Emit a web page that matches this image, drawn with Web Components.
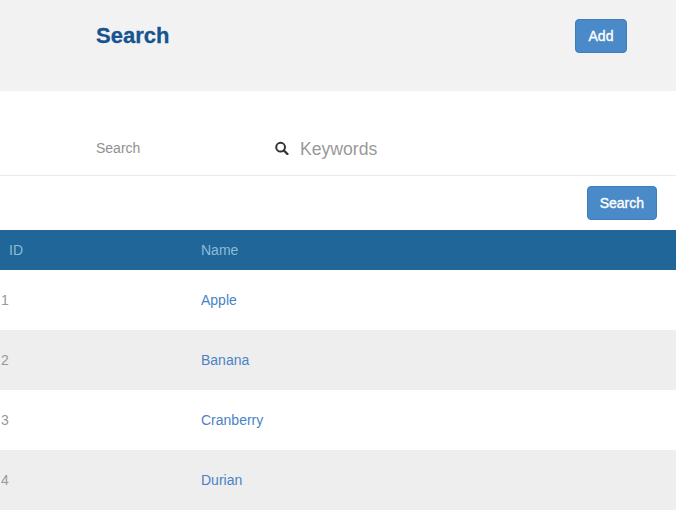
<!DOCTYPE html>
<html>
<head>
<meta charset="utf-8">
<style>
  html, body { margin: 0; padding: 0; background: #fff; overflow: hidden; }
  body { font-family: "Liberation Sans", Arial, sans-serif; }
</style>
</head>
<body>
<page-header heading="Search"><app-button>Add</app-button></page-header>
<search-form label="Search" placeholder="Keywords"></search-form>
<search-actions><app-button>Search</app-button></search-actions>
<fruit-table>
  <fruit-row item-id="1" name="Apple"></fruit-row>
  <fruit-row item-id="2" name="Banana"></fruit-row>
  <fruit-row item-id="3" name="Cranberry"></fruit-row>
  <fruit-row item-id="4" name="Durian"></fruit-row>
</fruit-table>

<script>
class AppButton extends HTMLElement {
  constructor() {
    super();
    this.attachShadow({ mode: "open" }).innerHTML = `
      <style>
        :host { display: inline-block; }
        button {
          display: block;
          box-sizing: border-box;
          min-width: 52px;
          height: 34px;
          padding: 0 12px;
          background: #4a8ac8;
          border: 1px solid #3f7cb8;
          border-radius: 4px;
          color: #fff;
          font: 14px "Liberation Sans", Arial, sans-serif;
          -webkit-text-stroke: 0.35px #fff;
        }
      </style>
      <button><slot></slot></button>`;
  }
}
customElements.define("app-button", AppButton);

class PageHeader extends HTMLElement {
  constructor() {
    super();
    this.attachShadow({ mode: "open" }).innerHTML = `
      <style>
        :host {
          display: flex;
          justify-content: space-between;
          align-items: flex-start;
          height: 91px;
          box-sizing: border-box;
          padding: 19px 49px 0 96px;
          background: #f2f2f2;
        }
        h1 {
          margin: 0;
          font: bold 22px/34px "Liberation Sans", Arial, sans-serif;
          color: #17548f;
          -webkit-text-stroke: 0.3px #17548f;
        }
      </style>
      <h1>${this.getAttribute("heading")}</h1>
      <slot></slot>`;
  }
}
customElements.define("page-header", PageHeader);

class SearchForm extends HTMLElement {
  constructor() {
    super();
    this.attachShadow({ mode: "open" }).innerHTML = `
      <style>
        :host {
          display: flex;
          align-items: center;
          height: 85px;
          box-sizing: border-box;
          padding: 30px 0 0 96px;
          border-bottom: 1px solid #eaeaea;
        }
        label { width: 179px; font-size: 14px; color: #8f8f8f; }
        svg { width: 14px; height: 14px; margin-right: 11px; }
        span { font-size: 17.6px; line-height: 22px; padding-top: 1px; color: #999; }
      </style>
      <label>${this.getAttribute("label")}</label>
      <svg viewBox="0 0 14 14" fill="none" stroke="#333" aria-hidden="true">
        <circle cx="5.6" cy="6.2" r="4.4" stroke-width="2"/>
        <path d="M8.9 9.5 L12.4 13" stroke-width="2.4" stroke-linecap="round"/>
      </svg>
      <span>${this.getAttribute("placeholder")}</span>`;
  }
}
customElements.define("search-form", SearchForm);

class SearchActions extends HTMLElement {
  constructor() {
    super();
    this.attachShadow({ mode: "open" }).innerHTML = `
      <style>
        :host {
          display: flex;
          justify-content: flex-end;
          height: 54px;
          box-sizing: border-box;
          padding: 10px 19px 0 0;
        }
      </style>
      <slot></slot>`;
  }
}
customElements.define("search-actions", SearchActions);

class FruitTable extends HTMLElement {
  constructor() {
    super();
    this.attachShadow({ mode: "open" }).innerHTML = `
      <style>
        :host { display: block; font-size: 14px; }
        header {
          display: grid;
          grid-template-columns: 201px 1fr;
          align-items: center;
          height: 40px;
          background: #206698;
          color: #8cbcd9;
        }
        header span:first-child { padding-left: 9px; }
        ::slotted(fruit-row:nth-of-type(even)) { background: #eee; }
      </style>
      <header><span>ID</span><span>Name</span></header>
      <slot></slot>`;
  }
}
customElements.define("fruit-table", FruitTable);

class FruitRow extends HTMLElement {
  constructor() {
    super();
    this.attachShadow({ mode: "open" }).innerHTML = `
      <style>
        :host {
          display: grid;
          grid-template-columns: 201px 1fr;
          align-items: center;
          height: 60px;
        }
        span { padding-left: 1px; color: #999; }
        a { color: #4a83c4; text-decoration: none; }
      </style>
      <span>${this.getAttribute("item-id")}</span>
      <a href="#">${this.getAttribute("name")}</a>`;
  }
}
customElements.define("fruit-row", FruitRow);
</script>
</body>
</html>
